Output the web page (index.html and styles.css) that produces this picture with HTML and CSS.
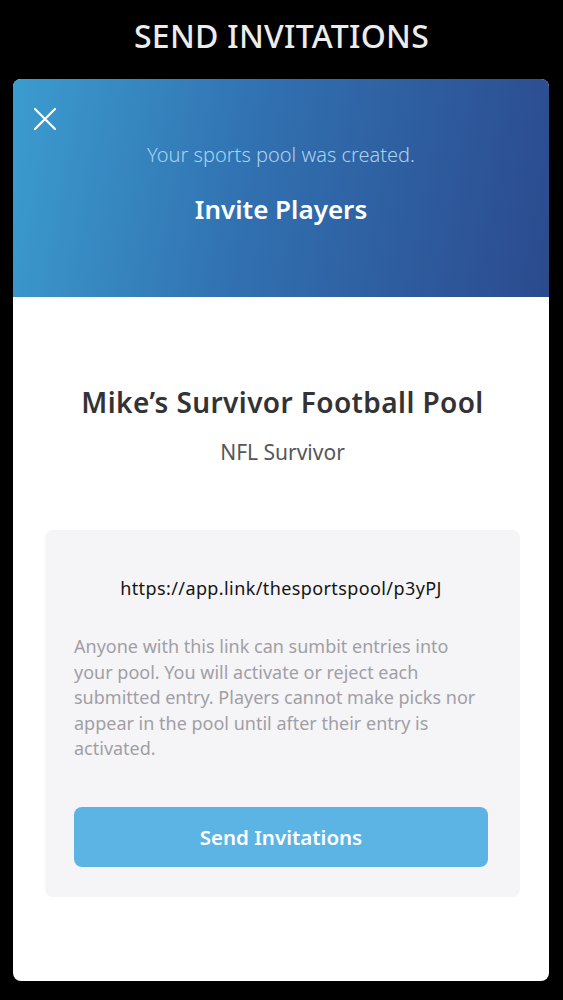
FILE: index.html
```html
<!DOCTYPE html>
<html>
<head>
<meta charset="utf-8">
<link rel="stylesheet" href="styles.css">
</head>
<body>
<div class="screen">
  <h1 class="page-title">SEND INVITATIONS</h1>
  <div class="card">
    <div class="card-header">
      <button class="close" aria-label="Close">
        <svg width="24" height="24" viewBox="0 0 24 24"><path d="M2 2 L22 22 M22 2 L2 22" stroke="#fff" stroke-width="2.2" stroke-linecap="round" fill="none"/></svg>
      </button>
      <p class="subtitle">Your sports pool was created.</p>
      <h2 class="header-title">Invite Players</h2>
    </div>
    <div class="card-body">
      <h3 class="pool-name">Mike’s Survivor Football Pool</h3>
      <p class="pool-type">NFL Survivor</p>
      <div class="link-box">
        <p class="link">https://app.link/thesportspool/p3yPJ</p>
        <p class="desc">Anyone with this link can sumbit entries into your pool. You will activate or reject each submitted entry. Players cannot make picks nor appear in the pool until after their entry is activated.</p>
        <button class="send">Send Invitations</button>
      </div>
    </div>
  </div>
</div>
</body>
</html>
```
FILE: styles.css
```css
html, body {
  margin: 0;
  padding: 0;
  background: #000;
}
body {
  font-family: "Noto Sans", Lato, sans-serif;
  width: 563px;
  height: 1000px;
  overflow: hidden;
}
.screen {
  display: flex;
  flex-direction: column;
  height: 1000px;
}
.page-title {
  margin: 0;
  height: 79px;
  display: flex;
  align-items: center;
  justify-content: center;
  padding-bottom: 8px;
  box-sizing: border-box;
  color: #ececec;
  font-size: 32px;
  font-weight: 500;
  letter-spacing: 0.3px;
}
.card {
  margin: 0 14px 0 13px;
  height: 902px;
  background: #fff;
  border-radius: 8px;
  overflow: hidden;
  display: flex;
  flex-direction: column;
}
.card-header {
  position: relative;
  height: 218px;
  flex: none;
  background: linear-gradient(100deg, #3b9ccf 0%, #3170b0 45%, #2b4a8e 100%);
  display: flex;
  flex-direction: column;
  align-items: center;
}
.close {
  position: absolute;
  left: 20px;
  top: 28px;
  background: none;
  border: 0;
  padding: 0;
  width: 24px;
  height: 24px;
}
.close svg { display: block; }
.subtitle {
  margin: 62px 0 0;
  color: #a9d3ef;
  font-size: 20px;
  font-weight: 300;
  line-height: 28px;
}
.header-title {
  margin: 24px 0 0;
  color: #fff;
  font-size: 26px;
  font-weight: 600;
  line-height: 32px;
}
.card-body {
  display: flex;
  flex-direction: column;
  align-items: center;
  padding: 0 29px 0 32px;
}
.pool-name {
  margin: 88px 0 0;
  color: #333336;
  font-size: 28px;
  font-weight: 600;
  letter-spacing: 0.4px;
  line-height: 34px;
}
.pool-type {
  margin: 20px 0 0;
  color: #56565a;
  font-size: 21px;
  font-weight: 400;
  line-height: 26px;
}
.link-box {
  margin-top: 65px;
  align-self: stretch;
  background: #f5f4f7;
  border-radius: 8px;
  padding: 46px 32px 30px 29px;
  height: 367px;
  box-sizing: border-box;
}
.link {
  margin: 0;
  text-align: center;
  color: #141414;
  font-size: 18px;
  letter-spacing: 0.4px;
  line-height: 24px;
}
.desc {
  margin: 34px 0 0;
  padding-right: 3px;
  color: #a19fa5;
  font-size: 18px;
  line-height: 25.5px;
}
.send {
  display: block;
  width: 100%;
  margin-top: 45px;
  height: 60px;
  border: 0;
  border-radius: 8px;
  background: #5cb4e4;
  color: #fff;
  font-family: "Noto Sans", Lato, sans-serif;
  font-size: 20.5px;
  font-weight: 600;
}
```
